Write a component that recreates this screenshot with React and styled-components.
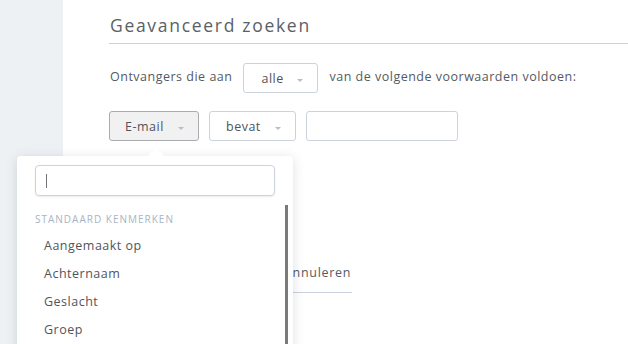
import React from "react";
import styled, { createGlobalStyle } from "styled-components";

const GlobalStyle = createGlobalStyle`
  html, body {
    margin: 0;
    padding: 0;
    background: #ffffff;
  }
  body {
    font-family: "Open Sans", "Liberation Sans", sans-serif;
    color: #555a61;
    overflow: hidden;
  }
`;

const Page = styled.div`
  position: relative;
  display: flex;
  width: 628px;
  height: 344px;
  overflow: hidden;
`;

const Sidebar = styled.aside`
  flex: 0 0 63px;
  background: #eef1f4;
`;

const Main = styled.main`
  flex: 1;
  padding: 10px 0 0 46px;
`;

const Title = styled.h1`
  margin: 0;
  padding: 2px 0 0 1px;
  height: 31px;
  border-bottom: 1px solid #c9d1dc;
  font-size: 17.5px;
  font-weight: 400;
  letter-spacing: 1.7px;
  color: #5b6067;
  line-height: 26px;
`;

const Row = styled.div`
  display: flex;
  align-items: center;
  gap: 10px;
  margin-top: ${(p) => p.$top || 19}px;
  font-size: 12.5px;
  letter-spacing: 0.5px;
`;

const RowText = styled.span`
  padding: 0 1px;
  margin-top: -4px;
`;

const SelectBox = styled.div`
  box-sizing: border-box;
  display: flex;
  align-items: center;
  justify-content: space-between;
  width: ${(p) => p.$w}px;
  height: 30px;
  padding: 0 14px 0 ${(p) => p.$pl || 20}px;
  border: 1px solid ${(p) => (p.$active ? "#a9acb0" : "#ccd3dc")};
  border-radius: 3px;
  background: ${(p) => (p.$active ? "#f1f1f1" : "#ffffff")};
  font-size: 12.5px;
  letter-spacing: 0.5px;
  color: #4f545a;
`;

const Caret = styled.span`
  width: 0;
  height: 0;
  margin-top: 4px;
  border-left: 3px solid transparent;
  border-right: 3px solid transparent;
  border-top: 3px solid #b9bec5;
`;

const TextInput = styled.div`
  box-sizing: border-box;
  width: 152px;
  height: 30px;
  border: 1px solid #ccd3dc;
  border-radius: 3px;
  background: #fff;
`;

const Actions = styled.div`
  display: flex;
  align-items: flex-start;
  gap: 23px;
  margin-top: 120px;
`;

const PrimaryButton = styled.div`
  width: 150px;
  height: 32px;
`;

const LinkButton = styled.span`
  padding: 3px 1px 11px 2px;
  border-bottom: 1px solid #c9d1dc;
  font-size: 12.5px;
  letter-spacing: 0.7px;
  color: #555a61;
`;

const Popup = styled.div`
  position: absolute;
  left: 17px;
  top: 156px;
  width: 276px;
  height: 210px;
  box-sizing: border-box;
  padding: 9px 0 0 18px;
  background: #ffffff;
  border-radius: 4px;
  box-shadow: 0 2px 12px rgba(40, 55, 75, 0.16);

  &::before {
    content: "";
    position: absolute;
    left: 131px;
    top: -8px;
    border-left: 8px solid transparent;
    border-right: 8px solid transparent;
    border-bottom: 8px solid #ffffff;
  }
`;

const SearchField = styled.div`
  box-sizing: border-box;
  display: flex;
  align-items: center;
  width: 240px;
  height: 31px;
  padding-left: 10px;
  border: 1px solid #ccd3dc;
  border-radius: 4px;
  box-shadow: 0 1px 2px rgba(0, 0, 0, 0.08);
`;

const TextCursor = styled.span`
  width: 1px;
  height: 14px;
  background: #707479;
`;

const List = styled.div`
  margin-top: 14px;
`;

const GroupLabel = styled.div`
  margin-bottom: 4px;
  font-size: 10px;
  letter-spacing: 1px;
  color: #a9b4c2;
  text-transform: uppercase;
  line-height: 18px;
`;

const Item = styled.div`
  padding-left: 9px;
  font-size: 12.5px;
  letter-spacing: 0.5px;
  color: #50555c;
  line-height: 28px;
`;

const ScrollThumb = styled.div`
  position: absolute;
  right: 5px;
  top: 49px;
  width: 3px;
  height: 160px;
  background: #7a7a7a;
`;

const fields = ["Aangemaakt op", "Achternaam", "Geslacht", "Groep"];

export default function App() {
  return (
    <>
      <GlobalStyle />
      <Page>
        <Sidebar />
        <Main>
          <Title>Geavanceerd zoeken</Title>
          <Row>
            <RowText>Ontvangers die aan</RowText>
            <SelectBox $w={75} $pl={17}>
              alle
              <Caret />
            </SelectBox>
            <RowText>van de volgende voorwaarden voldoen:</RowText>
          </Row>
          <Row $top={18}>
            <SelectBox $w={90} $pl={15} $active>
              E-mail
              <Caret />
            </SelectBox>
            <SelectBox $w={87} $pl={16}>
              bevat
              <Caret />
            </SelectBox>
            <TextInput />
          </Row>
          <Actions>
            <PrimaryButton />
            <LinkButton>Annuleren</LinkButton>
          </Actions>
        </Main>
        <Popup>
          <SearchField>
            <TextCursor />
          </SearchField>
          <List>
            <GroupLabel>Standaard kenmerken</GroupLabel>
            {fields.map((f) => (
              <Item key={f}>{f}</Item>
            ))}
          </List>
          <ScrollThumb />
        </Popup>
      </Page>
    </>
  );
}
